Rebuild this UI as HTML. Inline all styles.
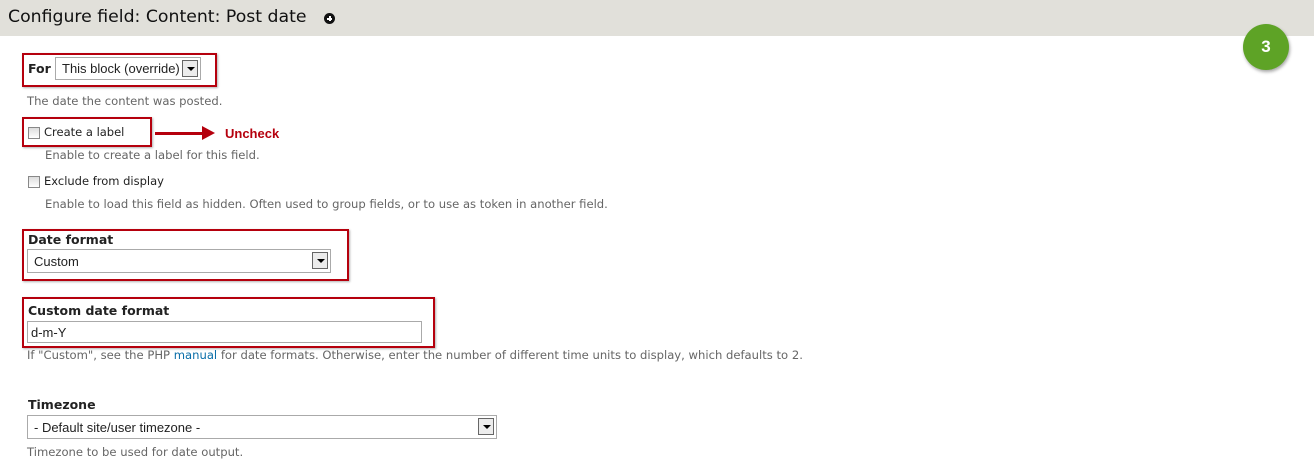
<!DOCTYPE html>
<html><head><meta charset="utf-8"><style>
*{margin:0;padding:0;box-sizing:border-box}
body{width:1314px;height:474px;background:#fff;position:relative;overflow:hidden;font-family:"DejaVu Sans","Liberation Sans",sans-serif;}
.a{position:absolute;white-space:nowrap}
.hdr{position:absolute;left:0;top:0;width:1314px;height:36px;background:#e1e0da}
.title{left:8px;top:7px;font-size:17.3px;color:#111;font-family:"DejaVu Sans",sans-serif}
.desc{font-size:11.6px;color:#666}
.lbl{font-size:12.5px;font-weight:bold;color:#222}
.rb{position:absolute;border:2px solid #b5000d;box-shadow:1px 1px 2px rgba(0,0,0,.3)}
.sel{position:absolute;border:1px solid #aaa;background:#fff;font-family:"Liberation Sans",Arial,sans-serif;font-size:13px;color:#222;padding-left:6px}
.sel .ar{position:absolute;right:2px;top:2px;width:16px;height:17px;border:1px solid #666;background:#ececec}
.sel .ar:after{content:"";position:absolute;left:4px;top:6px;border-left:4px solid transparent;border-right:4px solid transparent;border-top:4px solid #000}
.cb{position:absolute;width:12px;height:12px;border:1px solid #888;background:linear-gradient(#ddd,#fff)}
.ct{font-size:11.5px;color:#222}
</style></head><body>
<div class="hdr"></div>
<div class="a title">Configure field: Content: Post date</div>
<div class="a" style="left:324px;top:13px;width:11px;height:11px;border-radius:50%;background:#111"></div>
<div class="a" style="left:327px;top:17.5px;width:5px;height:2px;background:#fff"></div>
<div class="a" style="left:328.5px;top:16px;width:2px;height:5px;background:#fff"></div>
<div class="a" style="left:1243px;top:24px;width:46px;height:46px;border-radius:50%;background:#5ea326;box-shadow:1px 2px 3px rgba(0,0,0,.35);color:#fff;font:bold 17px 'Liberation Sans',Arial,sans-serif;text-align:center;line-height:46px">3</div>

<div class="rb" style="left:22px;top:53px;width:195px;height:34px"></div>
<div class="a lbl" style="left:28px;top:61px">For</div>
<div class="sel" style="left:55px;top:57px;width:146px;height:23px;line-height:21px">This block (override)<div class="ar"></div></div>
<div class="a desc" style="left:27px;top:94px">The date the content was posted.</div>

<div class="rb" style="left:22px;top:117px;width:130px;height:30px"></div>
<div class="cb" style="left:28px;top:127px"></div>
<div class="a ct" style="left:44px;top:125px">Create a label</div>
<div class="a" style="left:155px;top:132px;width:48px;height:3px;background:#b5000d"></div>
<div class="a" style="left:202px;top:126px;border-top:7px solid transparent;border-bottom:7px solid transparent;border-left:13px solid #b5000d"></div>
<div class="a" style="left:225px;top:126px;font:bold 13px 'Liberation Sans',Arial,sans-serif;color:#b5000d">Uncheck</div>
<div class="a desc" style="left:45px;top:148px">Enable to create a label for this field.</div>
<div class="cb" style="left:28px;top:176px"></div>
<div class="a ct" style="left:44px;top:174px">Exclude from display</div>
<div class="a desc" style="left:45px;top:197px">Enable to load this field as hidden. Often used to group fields, or to use as token in another field.</div>

<div class="rb" style="left:22px;top:229px;width:327px;height:52px"></div>
<div class="a lbl" style="left:28px;top:232px">Date format</div>
<div class="sel" style="left:27px;top:249px;width:304px;height:24px;line-height:23px">Custom<div class="ar"></div></div>

<div class="rb" style="left:22px;top:297px;width:413px;height:51px"></div>
<div class="a lbl" style="left:28px;top:303px">Custom date format</div>
<div class="sel" style="left:27px;top:321px;width:395px;height:22px;line-height:21px;padding-left:3px">d-m-Y</div>
<div class="a desc" style="left:27px;top:348px">If "Custom", see the PHP <span style="color:#0a6ea8">manual</span> for date formats. Otherwise, enter the number of different time units to display, which defaults to 2.</div>

<div class="a lbl" style="left:28px;top:397px">Timezone</div>
<div class="sel" style="left:27px;top:415px;width:470px;height:24px;line-height:23px">- Default site/user timezone -<div class="ar"></div></div>
<div class="a desc" style="left:27px;top:445px">Timezone to be used for date output.</div>
</body></html>
